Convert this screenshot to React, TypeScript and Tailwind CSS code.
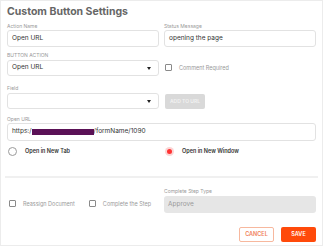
import { useState } from 'react';

function Label({ children }: { children: React.ReactNode }) {
  return <div className="h-[7px] text-[5px] leading-[7px] text-[#9a9a9a]">{children}</div>;
}

function Caret() {
  return (
    <svg width="4" height="3" viewBox="0 0 4 3" className="mr-[3px]">
      <path d="M0 0h4L2 3z" fill="#222" />
    </svg>
  );
}

function Checkbox({ label }: { label: string }) {
  return (
    <div className="flex items-center">
      <span className="w-[7px] h-[7px] border border-[#8a8a8a] rounded-[1px] bg-white" />
      <span className="ml-[7px] text-[5.5px] text-[#9a9a9a]">{label}</span>
    </div>
  );
}

export default function App() {
  const [newWindow, setNewWindow] = useState(true);

  return (
    <div
      className="w-[323px] h-[246px] bg-white border border-[#ececec] overflow-hidden"
      style={{ fontFamily: 'Inter, "Open Sans", sans-serif' }}
    >
      <div className="px-[6px]">
        <h2 className="pt-[3px] text-[10.5px] leading-[15px] font-bold text-[#666]">Custom Button Settings</h2>

        {/* 이름 / 상태 메시지 */}
        <div className="grid grid-cols-2 gap-x-[5px] mt-[4px]">
          <div>
            <Label>Action Name</Label>
            <div className="h-[17px] border border-[#e2e2e2] rounded-[3px] flex items-center px-[4px] text-[6.5px] text-[#333]">Open URL</div>
          </div>
          <div>
            <Label>Status Message</Label>
            <div className="h-[17px] border border-[#e2e2e2] rounded-[3px] flex items-center px-[4px] text-[6.5px] text-[#333]">opening the page</div>
          </div>
        </div>

        {/* 버튼 액션 */}
        <div className="grid grid-cols-2 gap-x-[5px] mt-[5px]">
          <div>
            <Label>BUTTON ACTION</Label>
            <div className="mt-[1px] h-[16px] border border-[#e2e2e2] rounded-[3px] flex items-center justify-between px-[4px] text-[6.5px] text-[#333]">
              <span>Open URL</span>
              <Caret />
            </div>
          </div>
          <div className="flex items-end pb-[4px] pl-[1px]">
            <Checkbox label="Comment Required" />
          </div>
        </div>

        {/* 필드 */}
        <div className="grid grid-cols-2 gap-x-[5px] mt-[9px]">
          <div>
            <Label>Field</Label>
            <div className="mt-[1px] h-[16px] border border-[#e2e2e2] rounded-[3px] flex items-center justify-end px-[4px]">
              <Caret />
            </div>
          </div>
          <div className="flex items-end pl-[1px]">
            <button className="h-[15px] w-[40px] rounded-[2px] bg-[#d9d9d9] text-[5px] text-[#f2f2f2] font-semibold">ADD TO URL</button>
          </div>
        </div>

        {/* URL */}
        <div className="mt-[7px]">
          <Label>Open URL</Label>
          <div className="h-[18px] border border-[#e2e2e2] rounded-[3px] flex items-center px-[4px] text-[6.5px] text-[#333]">
            <span>https:/</span>
            <span className="w-[62px] h-[6px] bg-[#5a1156]" />
            <span>/formName/1090</span>
          </div>
        </div>

        {/* 라디오 */}
        <div className="grid grid-cols-2 gap-x-[5px] mt-[6px] h-[9px]">
          <button className="flex items-center" onClick={() => setNewWindow(false)}>
            <span className="w-[9px] h-[9px] rounded-full border border-[#9a9a9a] flex items-center justify-center ml-[1px]">
              {!newWindow && <span className="w-[5px] h-[5px] rounded-full bg-[#f33]" />}
            </span>
            <span className="ml-[8px] text-[5.5px] font-semibold text-[#333]">Open in New Tab</span>
          </button>
          <button className="flex items-center" onClick={() => setNewWindow(true)}>
            <span className={`w-[9px] h-[9px] rounded-full flex items-center justify-center ml-[1px] ${newWindow ? 'bg-[#fbd5d5]' : 'border border-[#9a9a9a]'}`}>
              {newWindow && <span className="w-[5px] h-[5px] rounded-full bg-[#f33]" />}
            </span>
            <span className="ml-[8px] text-[5.5px] font-semibold text-[#333]">Open in New Window</span>
          </button>
        </div>
      </div>

      <div className="mx-[4px] mt-[20px] h-[2px] bg-[#f0f0f0]" />

      <div className="px-[6px]">
        {/* 완료 단계 */}
        <div className="grid grid-cols-2 gap-x-[5px] mt-[10px]">
          <div className="flex items-end pb-[5px] pl-[2px] gap-x-[14px]">
            <Checkbox label="Reassign Document" />
            <Checkbox label="Complete the Step" />
          </div>
          <div>
            <Label>Complete Step Type</Label>
            <div className="mt-[1px] h-[17px] rounded-[3px] bg-[#e6e6e6] flex items-center px-[4px] text-[6.5px] text-[#9a9a9a]">Approve</div>
          </div>
        </div>

        <div className="flex justify-end gap-x-[7px] mt-[14px]">
          <button className="h-[15px] w-[35px] rounded-[2px] border border-[#f7b89e] text-[5.5px] text-[#f0805a] font-semibold">CANCEL</button>
          <button className="h-[15px] w-[35px] rounded-[2px] bg-[#ff4a0a] text-[5.5px] text-white font-semibold">SAVE</button>
        </div>
      </div>
    </div>
  );
}
